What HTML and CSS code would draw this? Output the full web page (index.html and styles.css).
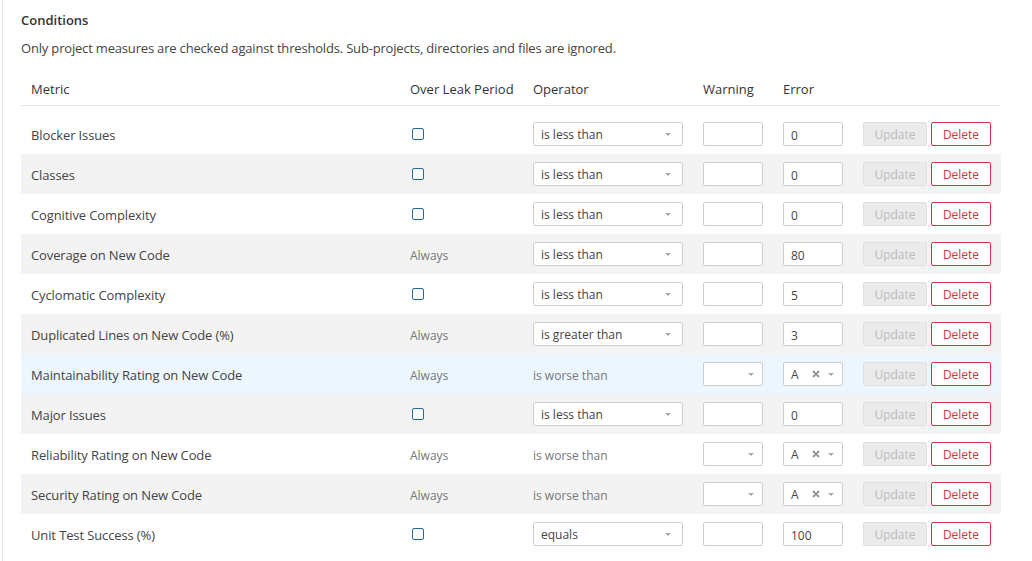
FILE: index.html
```html
<!DOCTYPE html>
<html>
<head>
<meta charset="utf-8">
<link rel="stylesheet" href="styles.css">
</head>
<body>
<div class="page">
  <h3 class="title">Conditions</h3>
  <p class="desc">Only project measures are checked against thresholds. Sub-projects, directories and files are ignored.</p>
  <table class="conds">
    <colgroup>
      <col class="c-metric"><col class="c-leak"><col class="c-op"><col class="c-warn"><col class="c-err"><col class="c-act">
    </colgroup>
    <thead>
      <tr><th>Metric</th><th>Over Leak Period</th><th>Operator</th><th>Warning</th><th>Error</th><th></th></tr>
    </thead>
    <tbody>
      <tr>
        <td><span class="name">Blocker Issues</span></td>
        <td><span class="cb"></span></td>
        <td><div class="sel">is less than<span class="arr"></span></div></td>
        <td><div class="inp"></div></td>
        <td><div class="inp">0</div></td>
        <td><div class="acts"><span class="btn upd">Update</span><span class="btn del">Delete</span></div></td>
      </tr>
      <tr class="alt">
        <td><span class="name">Classes</span></td>
        <td><span class="cb"></span></td>
        <td><div class="sel">is less than<span class="arr"></span></div></td>
        <td><div class="inp"></div></td>
        <td><div class="inp">0</div></td>
        <td><div class="acts"><span class="btn upd">Update</span><span class="btn del">Delete</span></div></td>
      </tr>
      <tr>
        <td><span class="name">Cognitive Complexity</span></td>
        <td><span class="cb"></span></td>
        <td><div class="sel">is less than<span class="arr"></span></div></td>
        <td><div class="inp"></div></td>
        <td><div class="inp">0</div></td>
        <td><div class="acts"><span class="btn upd">Update</span><span class="btn del">Delete</span></div></td>
      </tr>
      <tr class="alt">
        <td><span class="name">Coverage on New Code</span></td>
        <td><span class="muted">Always</span></td>
        <td><div class="sel">is less than<span class="arr"></span></div></td>
        <td><div class="inp"></div></td>
        <td><div class="inp">80</div></td>
        <td><div class="acts"><span class="btn upd">Update</span><span class="btn del">Delete</span></div></td>
      </tr>
      <tr>
        <td><span class="name">Cyclomatic Complexity</span></td>
        <td><span class="cb"></span></td>
        <td><div class="sel">is less than<span class="arr"></span></div></td>
        <td><div class="inp"></div></td>
        <td><div class="inp">5</div></td>
        <td><div class="acts"><span class="btn upd">Update</span><span class="btn del">Delete</span></div></td>
      </tr>
      <tr class="alt">
        <td><span class="name">Duplicated Lines on New Code (%)</span></td>
        <td><span class="muted">Always</span></td>
        <td><div class="sel">is greater than<span class="arr"></span></div></td>
        <td><div class="inp"></div></td>
        <td><div class="inp">3</div></td>
        <td><div class="acts"><span class="btn upd">Update</span><span class="btn del">Delete</span></div></td>
      </tr>
      <tr class="hl">
        <td><span class="name">Maintainability Rating on New Code</span></td>
        <td><span class="muted">Always</span></td>
        <td><span class="muted">is worse than</span></td>
        <td><div class="inp rsel"><span class="arr"></span></div></td>
        <td><div class="inp rsel">A<svg class="clr" width="8" height="8" viewBox="0 0 8 8"><path d="M1 1L7 7M7 1L1 7" stroke="#999" stroke-width="2"/></svg><span class="arr"></span></div></td>
        <td><div class="acts"><span class="btn upd">Update</span><span class="btn del">Delete</span></div></td>
      </tr>
      <tr class="alt">
        <td><span class="name">Major Issues</span></td>
        <td><span class="cb"></span></td>
        <td><div class="sel">is less than<span class="arr"></span></div></td>
        <td><div class="inp"></div></td>
        <td><div class="inp">0</div></td>
        <td><div class="acts"><span class="btn upd">Update</span><span class="btn del">Delete</span></div></td>
      </tr>
      <tr>
        <td><span class="name">Reliability Rating on New Code</span></td>
        <td><span class="muted">Always</span></td>
        <td><span class="muted">is worse than</span></td>
        <td><div class="inp rsel"><span class="arr"></span></div></td>
        <td><div class="inp rsel">A<svg class="clr" width="8" height="8" viewBox="0 0 8 8"><path d="M1 1L7 7M7 1L1 7" stroke="#999" stroke-width="2"/></svg><span class="arr"></span></div></td>
        <td><div class="acts"><span class="btn upd">Update</span><span class="btn del">Delete</span></div></td>
      </tr>
      <tr class="alt">
        <td><span class="name">Security Rating on New Code</span></td>
        <td><span class="muted">Always</span></td>
        <td><span class="muted">is worse than</span></td>
        <td><div class="inp rsel"><span class="arr"></span></div></td>
        <td><div class="inp rsel">A<svg class="clr" width="8" height="8" viewBox="0 0 8 8"><path d="M1 1L7 7M7 1L1 7" stroke="#999" stroke-width="2"/></svg><span class="arr"></span></div></td>
        <td><div class="acts"><span class="btn upd">Update</span><span class="btn del">Delete</span></div></td>
      </tr>
      <tr>
        <td><span class="name">Unit Test Success (%)</span></td>
        <td><span class="cb"></span></td>
        <td><div class="sel">equals<span class="arr"></span></div></td>
        <td><div class="inp"></div></td>
        <td><div class="inp">100</div></td>
        <td><div class="acts"><span class="btn upd">Update</span><span class="btn del">Delete</span></div></td>
      </tr>
    </tbody>
  </table>
</div>
</body>
</html>
```

FILE: styles.css
```css
html, body {
  margin: 0;
  padding: 0;
  background: #fff;
}
body {
  font-family: "Open Sans", "Noto Sans", sans-serif;
  font-size: 13px;
  color: #444;
}
.page {
  margin-left: 2px;
  border-left: 1px solid #e6e6e6;
  padding: 11px 31px 20px 18px;
  min-height: 530px;
}
.title {
  margin: 0;
  font-size: 13px;
  line-height: 18px;
  font-weight: 600;
  color: #333;
}
.desc {
  margin: 10px 0 14px;
  line-height: 18px;
  color: #444;
  letter-spacing: -0.18px;
}
.conds {
  width: 980px;
  table-layout: fixed;
  border-collapse: separate;
  border-spacing: 0;
}
.c-metric { width: 379px; }
.c-leak { width: 123px; }
.c-op { width: 170px; }
.c-warn { width: 80px; }
.c-err { width: 80px; }
.c-act { width: 148px; }
th {
  text-align: left;
  font-weight: 400;
  color: #333;
  line-height: 18px;
  padding: 9px 10px 7px;
  border-bottom: 1px solid #e6e6e6;
  white-space: nowrap;
}
td {
  padding: 8px 10px;
  height: 24px;
  line-height: 18px;
  vertical-align: middle;
  white-space: nowrap;
  color: #444;
}
tbody tr:first-child td {
  padding-top: 16px;
}
tr.alt td { background: #f3f3f3; }
tr.hl td { background: #ecf6fe; }
.name {
  display: block;
  padding-top: 2px;
  line-height: 18px;
  letter-spacing: -0.12px;
}
.cb {
  display: block;
  width: 10px;
  height: 10px;
  border: 1px solid #236a97;
  border-radius: 2px;
  margin-left: 2px;
  background: #fff;
}
.muted {
  display: block;
  padding-top: 4px;
  line-height: 18px;
  color: #777;
  font-size: 12px;
}
.sel, .inp {
  position: relative;
  box-sizing: border-box;
  height: 24px;
  border: 1px solid #cdcdcd;
  border-radius: 2px;
  background: #fff;
  font-size: 12px;
  line-height: 18px;
  padding: 3px 7px 0;
  color: #444;
}
.sel { width: 150px; }
.inp { width: 60px; padding-top: 4px; }
.inp.rsel { padding-top: 3px; }
.arr {
  position: absolute;
  right: 11px;
  top: 10px;
  width: 0;
  height: 0;
  border-left: 3px solid transparent;
  border-right: 3px solid transparent;
  border-top: 3.5px solid #aaa;
}
.rsel .arr { right: 8px; }
.clr {
  position: absolute;
  left: 28px;
  top: 7px;
}
.acts {
  display: flex;
  gap: 4px;
}
.btn {
  box-sizing: border-box;
  height: 24px;
  line-height: 18px;
  padding-top: 3px;
  border-radius: 2px;
  font-size: 12px;
  text-align: center;
}
.upd {
  width: 64px;
  background: #ebebeb;
  border: 1px solid #e0e0e0;
  color: #bbb;
}
.del {
  width: 60px;
  background: #fff;
  border: 1px solid #d4333f;
  color: #d4333f;
}
```
